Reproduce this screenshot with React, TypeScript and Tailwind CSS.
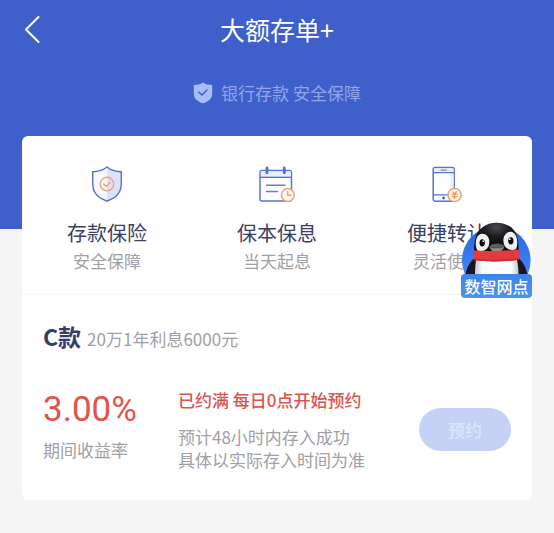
import type { ReactNode } from "react";

interface Feature {
  title: string;
  desc: string;
  icon: ReactNode;
}

function ShieldIcon() {
  return (
    <svg className="w-9 h-9" viewBox="0 0 36 36" fill="none">
      <path
        d="M18 1C14 4.300 8.500 5.600 3.700 5.800V17.500C3.700 26.500 9.500 32.300 18 35C26.500 32.300 32.300 26.500 32.300 17.500V5.800C27.500 5.600 22 4.300 18 1Z"
        fill="#f8f9ff"
      />
      <path
        d="M18 1C22 4.300 27.500 5.600 32.300 5.800V17.500C32.300 26.500 26.500 32.300 18 35Z"
        fill="#dde2fb"
      />
      <path
        d="M18 1C14 4.300 8.500 5.600 3.700 5.800V17.500C3.700 26.500 9.500 32.300 18 35C26.500 32.300 32.300 26.500 32.300 17.500V5.800C27.500 5.600 22 4.300 18 1Z"
        stroke="#5570cc"
        strokeWidth="1.400"
        strokeLinejoin="round"
      />
      <circle cx="18" cy="18" r="6.800" stroke="#eba877" strokeWidth="1.400" />
      <path
        d="M14.800 18L17.300 20.400L21.300 16.300"
        stroke="#eba877"
        strokeWidth="1.500"
        strokeLinecap="round"
        strokeLinejoin="round"
      />
    </svg>
  );
}

function CalendarIcon() {
  return (
    <svg className="w-9 h-9" viewBox="0 0 36 36" fill="none">
      <rect x="1" y="4.500" width="31.500" height="30.500" rx="2" fill="#fff" stroke="#5873d0" strokeWidth="1.500" />
      <path d="M1.800 5.300H31.700V10.500H1.800Z" fill="#e9edff" />
      <path d="M1 11.300H32.500" stroke="#5873d0" strokeWidth="1.400" />
      <path d="M8 2V6.800M25.300 2V6.800" stroke="#5270d4" strokeWidth="2.800" strokeLinecap="round" />
      <path d="M7.500 19.300H26M7.500 25.500H18.500" stroke="#667ed0" strokeWidth="1.500" strokeLinecap="round" />
      <circle cx="28.800" cy="29" r="6.400" fill="#fff6ef" stroke="#e9a47b" strokeWidth="1.500" />
      <path d="M28.600 25.500V29.300H32" stroke="#e9a47b" strokeWidth="1.500" strokeLinecap="round" />
    </svg>
  );
}

function PhoneIcon() {
  return (
    <svg className="w-9 h-9" viewBox="0 0 36 36" fill="none">
      <rect x="4.200" y="1.500" width="21" height="33.800" rx="2" fill="#fff" stroke="#5873d0" strokeWidth="1.500" />
      <path d="M5 2.300H24.500V5.800H5Z" fill="#e6eafd" />
      <path d="M21 7.300H24.500V28H21Z" fill="#eef1ff" />
      <path d="M4.200 6.600H25.200M4.200 28.900H25.200" stroke="#5873d0" strokeWidth="1.300" />
      <path d="M12 4.100H17.500" stroke="#7f8cc0" strokeWidth="1.200" strokeLinecap="round" />
      <circle cx="14.600" cy="32" r="1.400" fill="#3f61cf" />
      <circle cx="25.600" cy="29" r="6.600" fill="#fff6ef" stroke="#e9a47b" strokeWidth="1.500" />
      <path
        d="M23.400 25.300L25.600 28L27.800 25.300M22.800 28.400H28.400M22.800 30.600H28.400M25.600 28V33"
        stroke="#e9985f"
        strokeWidth="1.300"
      />
    </svg>
  );
}

function PenguinIcon() {
  return (
    <svg className="w-full" viewBox="62 36 211 165">
      <defs>
        <linearGradient id="disc" x1="0" y1="0" x2="0" y2="1">
          <stop offset="0" stopColor="#2263e6" />
          <stop offset="1" stopColor="#4f97fb" />
        </linearGradient>
        <radialGradient id="head" cx="0.5" cy="0.15" r="0.6">
          <stop offset="0" stopColor="#4a4a4c" />
          <stop offset="0.5" stopColor="#1c1c1e" />
          <stop offset="1" stopColor="#0c0c0e" />
        </radialGradient>
        <linearGradient id="belly" x1="0" y1="0" x2="1" y2="0">
          <stop offset="0" stopColor="#c6c6cd" />
          <stop offset="0.16" stopColor="#fbfbfc" />
          <stop offset="0.84" stopColor="#fbfbfc" />
          <stop offset="1" stopColor="#c6c6cd" />
        </linearGradient>
        <linearGradient id="beak" x1="0" y1="0" x2="0" y2="1">
          <stop offset="0" stopColor="#4a4848" />
          <stop offset="1" stopColor="#a9a09e" />
        </linearGradient>
      </defs>
      <circle cx="167" cy="150" r="102" fill="url(#disc)" />
      <path d="M103 142C88 154 76 174 74 201H260C258 174 247 154 232 142Z" fill="#19191b" />
      <path d="M104 201C103 180 104 160 109 140H226C232 160 233 180 233 201Z" fill="url(#belly)" />
      <path
        d="M102 130C100 116 101 98 105 84C112 56 136 38 167 38C199 38 222 54 229 80C233 96 234 116 232 130Z"
        fill="url(#head)"
      />
      <path
        d="M110 120C102 104 105 78 120 72C134 68 144 78 146 92C147 104 143 114 134 119C126 123 116 124 110 120Z"
        fill="#f1f1f3"
      />
      <path
        d="M226 116C233 98 229 72 214 66C200 62 190 74 188 88C187 101 192 112 202 116C210 120 220 120 226 116Z"
        fill="#f1f1f3"
      />
      <path d="M146 110C152 98 185 96 191 108C189 118 181 124 168 124C157 124 149 119 146 110Z" fill="url(#beak)" />
      <path d="M147 110C157 112 180 112 190 108" fill="none" stroke="#39373a" strokeWidth="2" />
      <ellipse cx="125" cy="98" rx="8" ry="11" fill="#09090b" />
      <ellipse cx="210" cy="92" rx="8" ry="11" fill="#09090b" />
      <circle cx="128" cy="93" r="2.500" fill="#fff" />
      <circle cx="207" cy="87" r="2.500" fill="#fff" />
      <path d="M101 121C145 123 190 122 233 118C237 126 237 138 234 148C190 154 145 155 102 150C98 140 98 130 101 121Z" fill="#e63a42" />
      <path d="M101 144C145 150 190 149 235 142L234 148C190 154 145 155 102 150Z" fill="#c4303a" />
    </svg>
  );
}

const features: Feature[] = [
  { title: "存款保险", desc: "安全保障", icon: <ShieldIcon /> },
  { title: "保本保息", desc: "当天起息", icon: <CalendarIcon /> },
  { title: "便捷转让", desc: "灵活使用", icon: <PhoneIcon /> },
];

function Header() {
  return (
    <header className="bg-[#3f5fcb] pb-[124px]">
      <div className="grid grid-cols-[1fr_auto_1fr] items-center h-[58px] px-[22px]">
        <button aria-label="返回" className="justify-self-start">
          <svg className="w-5 h-8" viewBox="0 0 20 32" fill="none">
            <path d="M16.500 4L4 16.500L16.500 29" stroke="#fff" strokeWidth="2" strokeLinecap="round" strokeLinejoin="round" />
          </svg>
        </button>
        <h1 className="text-[25px] leading-8 text-white">大额存单+</h1>
      </div>
      <p className="flex items-center justify-center gap-2 mt-[23px] text-[17px] leading-6 text-[#91a6ea]">
        <svg className="w-5 h-[22px]" viewBox="0 0 20 22">
          <path
            d="M10 0.500C7.500 2.300 4 3 0.800 3V11.500C0.800 16.500 4.500 19.800 10 21.300C15.500 19.800 19.200 16.500 19.200 11.500V3C16 3 12.500 2.300 10 0.500Z"
            fill="#a9bcfa"
          />
          <path d="M6 10.200L9 13L14 8" fill="none" stroke="#3f5fcb" strokeWidth="1.500" strokeLinecap="round" strokeLinejoin="round" />
        </svg>
        <span>银行存款 安全保障</span>
      </p>
    </header>
  );
}

export default function App() {
  return (
    <div className="min-h-screen bg-[#f5f5f5] font-['Noto_Sans_CJK_SC',sans-serif]">
      <Header />

      <main className="relative mx-[22px] -mt-[93px] rounded-md bg-white">
        <section className="grid grid-cols-3 pt-[30px] pb-5 border-b border-[#f3f3f5]">
          {features.map((item) => (
            <div key={item.title} className="flex flex-col items-center whitespace-nowrap">
              {item.icon}
              <h2 className="mt-4 text-[20px] leading-[30px] text-[#3a3f63]">{item.title}</h2>
              <p className="text-[17px] leading-[26px] text-[#a0a0a6]">{item.desc}</p>
            </div>
          ))}
        </section>

        <section className="px-[21px] pt-[25px] pb-[29px]">
          <div className="flex items-baseline gap-1.5">
            <h2 className="text-[23px] leading-8 font-bold text-[#333e68]">C款</h2>
            <span className="text-[17px] text-[#a0a0a6]">20万1年利息6000元</span>
          </div>

          <div className="flex items-center mt-9">
            <div className="w-[135px] shrink-0 pb-2">
              <p className="font-[Roboto,sans-serif] text-[35px] leading-10 text-[#e2534b]">3.00%</p>
              <p className="mt-2 text-[17px] leading-6 text-[#a0a0a6]">期间收益率</p>
            </div>
            <div className="flex-1 whitespace-nowrap text-[17px] leading-[23px] text-[#a0a0a6]">
              <p className="mb-3.5 font-medium text-[#d9564f]">已约满 每日0点开始预约</p>
              <p>预计48小时内存入成功</p>
              <p>具体以实际存入时间为准</p>
            </div>
            <button
              disabled
              className="h-[43px] w-[92px] shrink-0 rounded-full bg-[#c6d2f5] text-[17px] font-medium text-[#dde5fb]"
            >
              预约
            </button>
          </div>
        </section>

        <a href="#service" className="absolute right-0 top-[86px] w-[71px]">
          <PenguinIcon />
          <span className="relative -mt-1 flex h-6 items-center justify-center rounded-[4px] bg-gradient-to-b from-[#3a83ee] to-[#4d93ee] text-[16px] font-medium text-white">
            数智网点
          </span>
        </a>
      </main>
    </div>
  );
}
